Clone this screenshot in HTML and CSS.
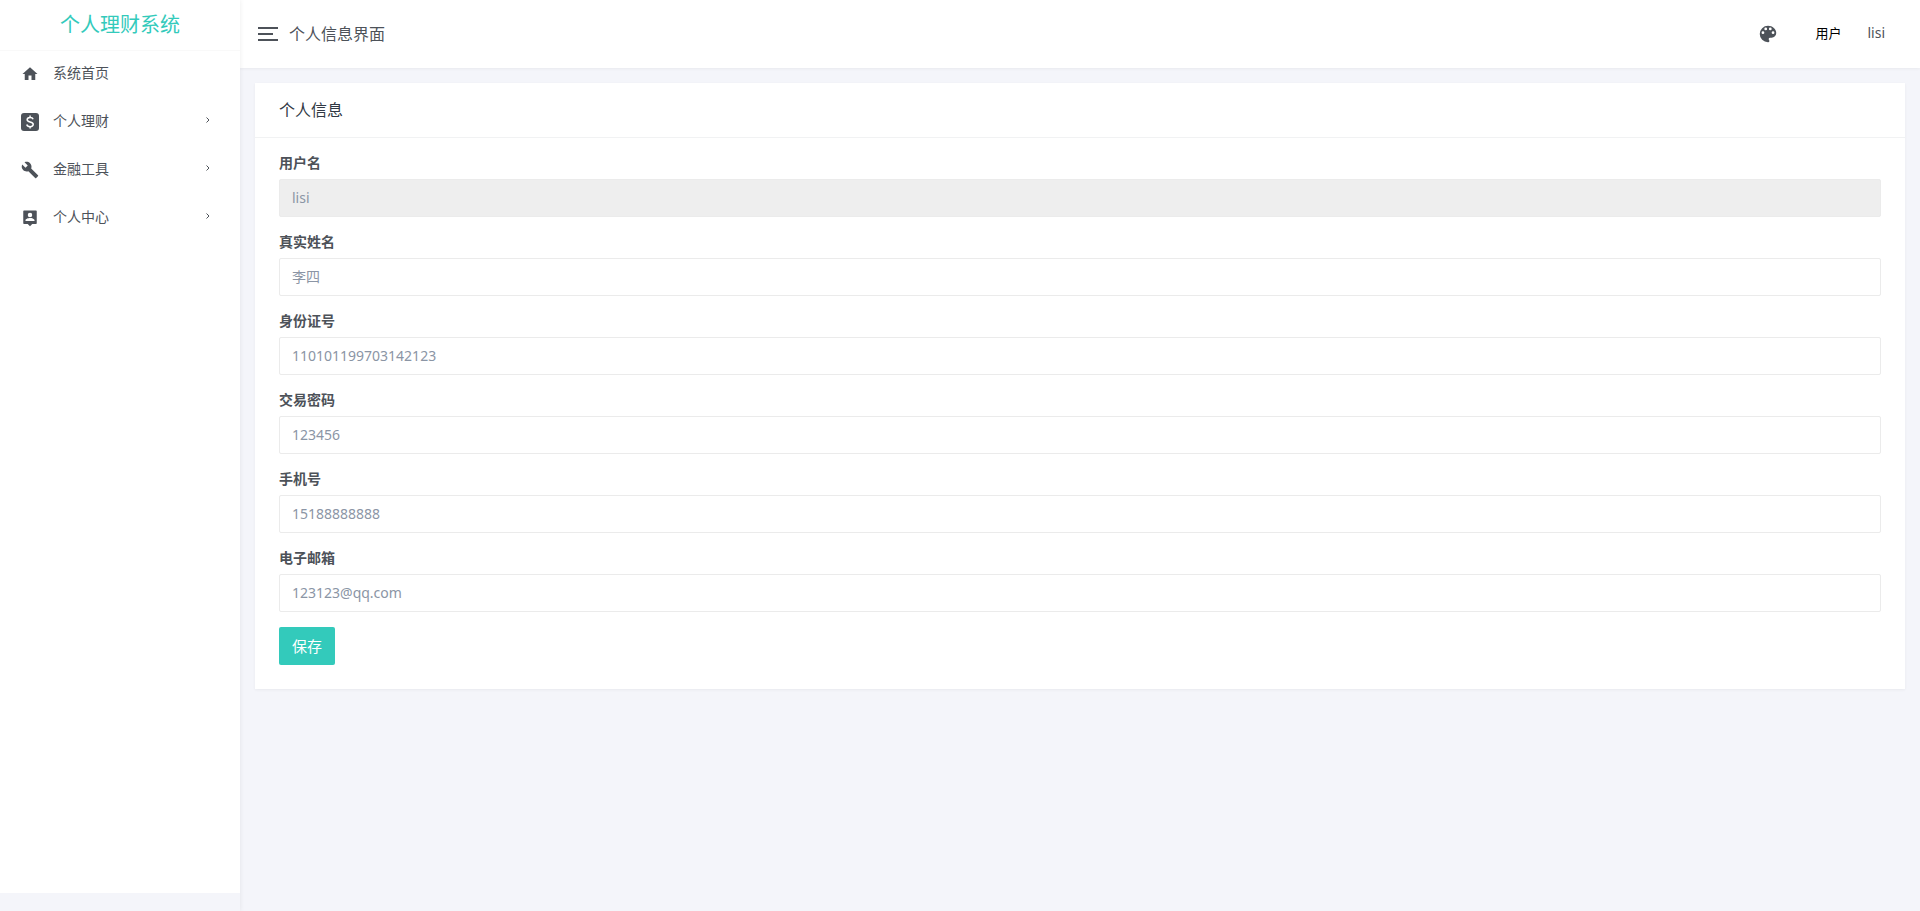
FILE: index.html
```html
<!DOCTYPE html>
<html lang="zh">
<head>
  <meta charset="UTF-8">
  <meta name="viewport" content="width=device-width, initial-scale=1.0">
  <title>个人信息界面 - 个人理财系统</title>
  <link rel="stylesheet" href="styles.css">
</head>
<body>
<div class="layout">
  <!-- 左侧导航 -->
  <aside class="sidebar">
    <div class="sidebar-main">
      <a class="logo" href="#">个人理财系统</a>
      <nav class="nav">
        <a class="nav-item" href="#">
          <svg class="nav-icon" viewBox="0 0 24 24"><path d="M10,20V14H14V20H19V12H22L12,3L2,12H5V20H10Z"/></svg>
          <span class="nav-text">系统首页</span>
        </a>
        <a class="nav-item" href="#">
          <svg class="nav-icon" viewBox="0 0 24 24"><path d="M4,0H20A4,4 0 0,1 24,4V20A4,4 0 0,1 20,24H4A4,4 0 0,1 0,20V4A4,4 0 0,1 4,0Z"/><path class="nav-line" d="M16.2,8.3C15.6,6.7 14.2,5.9 12.2,5.9C9.8,5.9 8.2,7 8.2,8.9C8.2,13 16.3,10.8 16.3,15.1C16.3,17.1 14.6,18.2 12.1,18.2C9.8,18.2 8.2,17.2 7.7,15.3M12.1,3.4V6M12.1,18V20.6"/></svg>
          <span class="nav-text">个人理财</span>
          <svg class="nav-arrow" viewBox="0 0 8 8"><path d="M2.5,1.5L5,4L2.5,6.5"/></svg>
        </a>
        <a class="nav-item" href="#">
          <svg class="nav-icon" viewBox="0 0 24 24"><path d="M22.7,19L13.6,9.9C14.5,7.6 14,4.9 12.1,3C10.1,1 7.1,0.6 4.7,1.7L9,6L6,9L1.6,4.7C0.4,7.1 0.9,10.1 2.9,12.1C4.8,14 7.5,14.5 9.8,13.6L18.9,22.7C19.3,23.1 19.9,23.1 20.3,22.7L22.6,20.4C23.1,20 23.1,19.3 22.7,19Z"/></svg>
          <span class="nav-text">金融工具</span>
          <svg class="nav-arrow" viewBox="0 0 8 8"><path d="M2.5,1.5L5,4L2.5,6.5"/></svg>
        </a>
        <a class="nav-item" href="#">
          <svg class="nav-icon" viewBox="0 0 24 24"><path fill-rule="evenodd" d="M20,2H4C3.4,2 3,2.4 3,3V19C3,19.6 3.4,20 4,20H9L12,23L15,20H20C20.6,20 21,19.6 21,19V3C21,2.4 20.6,2 20,2ZM12,5A3,3 0 0,1 15,8A3,3 0 0,1 12,11A3,3 0 0,1 9,8A3,3 0 0,1 12,5ZM18,16H6V15.1C6,13.1 10,12 12,12C14,12 18,13.1 18,15.1Z"/></svg>
          <span class="nav-text">个人中心</span>
          <svg class="nav-arrow" viewBox="0 0 8 8"><path d="M2.5,1.5L5,4L2.5,6.5"/></svg>
        </a>
      </nav>
    </div>
  </aside>

  <div class="page">
    <!-- 顶部 -->
    <header class="topbar">
      <button class="toggler" type="button" aria-label="菜单">
        <span class="toggler-bar"></span>
        <span class="toggler-bar toggler-short"></span>
        <span class="toggler-bar"></span>
      </button>
      <span class="topbar-title">个人信息界面</span>
      <div class="topbar-right">
        <button class="skin" type="button" aria-label="主题">
          <svg class="skin-icon" viewBox="0 0 24 24"><path d="M17.5,12A1.5,1.5 0 0,1 16,10.5A1.5,1.5 0 0,1 17.5,9A1.5,1.5 0 0,1 19,10.5A1.5,1.5 0 0,1 17.5,12M14.5,8A1.5,1.5 0 0,1 13,6.5A1.5,1.5 0 0,1 14.5,5A1.5,1.5 0 0,1 16,6.5A1.5,1.5 0 0,1 14.5,8M9.5,8A1.5,1.5 0 0,1 8,6.5A1.5,1.5 0 0,1 9.5,5A1.5,1.5 0 0,1 11,6.5A1.5,1.5 0 0,1 9.5,8M6.5,12A1.5,1.5 0 0,1 5,10.5A1.5,1.5 0 0,1 6.5,9A1.5,1.5 0 0,1 8,10.5A1.5,1.5 0 0,1 6.5,12M12,3A9,9 0 0,0 3,12A9,9 0 0,0 12,21A1.5,1.5 0 0,0 13.5,19.5C13.5,19.11 13.35,18.76 13.11,18.5C12.88,18.23 12.73,17.88 12.73,17.5A1.5,1.5 0 0,1 14.23,16H16A5,5 0 0,0 21,11C21,6.58 16.97,3 12,3Z"/></svg>
        </button>
        <span class="role">用户</span>
        <a class="user" href="#">lisi</a>
      </div>
    </header>

    <main class="content">
      <section class="card">
        <h4 class="card-header">个人信息</h4>
        <form class="card-body">
          <div class="form-group">
            <label for="username">用户名</label>
            <input class="form-control" type="text" id="username" value="lisi" disabled>
          </div>
          <div class="form-group">
            <label for="realname">真实姓名</label>
            <input class="form-control" type="text" id="realname" value="李四">
          </div>
          <div class="form-group">
            <label for="idcard">身份证号</label>
            <input class="form-control" type="text" id="idcard" value="110101199703142123">
          </div>
          <div class="form-group">
            <label for="paypwd">交易密码</label>
            <input class="form-control" type="text" id="paypwd" value="123456">
          </div>
          <div class="form-group">
            <label for="phone">手机号</label>
            <input class="form-control" type="text" id="phone" value="15188888888">
          </div>
          <div class="form-group">
            <label for="email">电子邮箱</label>
            <input class="form-control" type="text" id="email" value="123123@qq.com">
          </div>
          <button class="btn" type="button">保存</button>
        </form>
      </section>
    </main>
  </div>
</div>
</body>
</html>
```

FILE: styles.css
```css
* {
  box-sizing: border-box;
}

body {
  margin: 0;
  font-family: "Noto Sans", "Noto Sans CJK SC", sans-serif;
  font-size: 14px;
  line-height: 20px;
  color: #4d5259;
  background-color: #f4f5fa;
}

a {
  color: inherit;
  text-decoration: none;
}

.layout {
  display: flex;
  min-height: 100vh;
}

/* 左侧导航 */
.sidebar {
  position: relative;
  z-index: 1;
  flex: none;
  width: 240px;
  padding-bottom: 18px;
  display: flex;
  flex-direction: column;
  box-shadow: 0 0 5px rgba(0, 0, 0, 0.08);
}

.sidebar-main {
  flex: 1;
  background-color: #fff;
}

.logo {
  display: block;
  height: 51px;
  border-bottom: 1px solid #f9f9f9;
  font-size: 20px;
  line-height: 50px;
  text-align: center;
  color: #33cabb;
}

.nav-item {
  display: flex;
  align-items: center;
  height: 48px;
  padding: 0 28px 2px 21px;
}

.nav-icon {
  width: 18px;
  height: 18px;
  margin-right: 14px;
  fill: #4d5259;
}

.nav-line {
  fill: none;
  stroke: #fff;
  stroke-width: 2;
}

.nav-text {
  flex: 1;
  padding-bottom: 2px;
}

.nav-arrow {
  width: 8px;
  height: 8px;
  margin-bottom: 4px;
  fill: none;
  stroke: #4d5259;
}

.page {
  flex: 1;
  min-width: 0;
}

/* 顶部 */
.topbar {
  display: flex;
  align-items: center;
  height: 68px;
  padding: 0 35px 0 18px;
  background-color: #fff;
  box-shadow: 0 1px 3px rgba(0, 0, 0, 0.05);
}

.toggler {
  display: flex;
  flex-direction: column;
  gap: 4px;
  width: 20px;
  margin-right: 11px;
  padding: 0;
  border: 0;
  background: none;
}

.toggler-bar {
  width: 20px;
  height: 2px;
  background-color: #4d5259;
}

.toggler-short {
  width: 15px;
}

.topbar-title {
  font-size: 16px;
}

.topbar-right {
  display: flex;
  align-items: center;
  margin-left: auto;
}

.skin {
  display: flex;
  margin-right: 36px;
  padding: 0;
  border: 0;
  background: none;
}

.skin-icon {
  width: 22px;
  height: 22px;
  fill: #4d5259;
}

.role,
.user {
  padding-bottom: 2px;
}

.role {
  margin-right: 26px;
  font-size: 13px;
  color: #000;
}

/* 内容 */
.content {
  padding: 15px;
}

.card {
  background-color: #fff;
  box-shadow: 0 1px 3px rgba(0, 0, 0, 0.05);
}

.card-header {
  margin: 0;
  padding: 17px 24px;
  border-bottom: 1px solid #f1f2f3;
  font-size: 16px;
  font-weight: normal;
  color: #313944;
}

.card-body {
  padding: 15px 24px 24px;
}

.form-group {
  display: flex;
  flex-direction: column;
  gap: 6px;
  margin-bottom: 15px;
}

.form-group label {
  font-weight: bold;
}

.form-control {
  width: 100%;
  height: 38px;
  padding: 4px 12px 6px;
  border: 1px solid #ebebeb;
  border-radius: 2px;
  font-family: inherit;
  font-size: 14px;
  color: #8b95a5;
  background-color: #fff;
}

.form-control:disabled {
  background-color: #eee;
}

.btn {
  display: block;
  height: 38px;
  padding: 0 13px 2px;
  border: 0;
  border-radius: 2px;
  font-family: inherit;
  font-size: 15px;
  color: #fff;
  background-color: #33cabb;
}
```
